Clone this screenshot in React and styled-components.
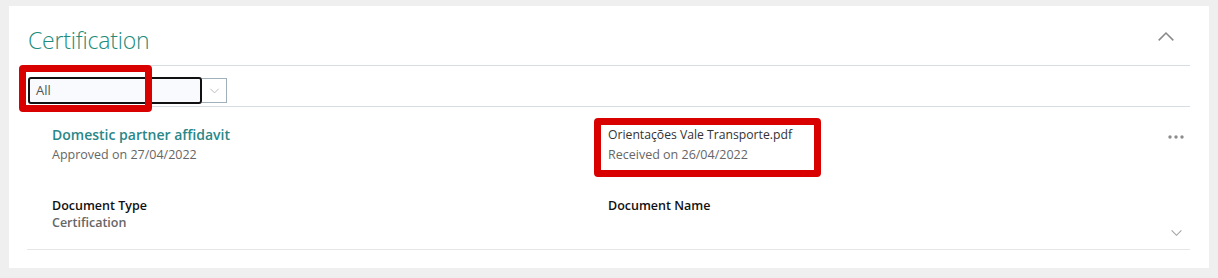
import React from "react";
import styled, { createGlobalStyle } from "styled-components";

const Global = createGlobalStyle`
  html, body { margin: 0; padding: 0; background: #efefef; }
  body { font-family: "Open Sans", "Noto Sans", sans-serif; }
  * { box-sizing: border-box; }
`;

const Page = styled.div`
  padding: 6px 9px 11px 9px;
`;

const Panel = styled.section`
  background: #fff;
  padding: 0 19px 18px 18px;
  position: relative;
`;

const Header = styled.div`
  display: flex;
  align-items: center;
  justify-content: space-between;
  height: 60px;
  border-bottom: 1px solid #d6dde3;
  padding: 9px 0 0 1px;
`;

const Title = styled.h2`
  margin: 0;
  font-weight: 300;
  font-size: 23px;
  color: #1c8c7c;
  letter-spacing: -0.2px;
`;

const IconButton = styled.button`
  border: 0;
  background: none;
  padding: 0;
  margin-right: ${(p) => p.$mr || 0}px;
  margin-top: ${(p) => p.$mt || 0}px;
  display: flex;
  align-items: center;
  justify-content: center;
  color: #8a8a8a;
  cursor: pointer;
`;

const FilterRow = styled.div`
  display: flex;
  align-items: center;
  height: 41px;
  padding: 8px 0 0 1px;
  border-bottom: 1px solid #d6dde3;
`;

const Select = styled.div`
  display: flex;
  align-items: stretch;
  height: 27px;
`;

const SelectBox = styled.div`
  width: 174px;
  border: 2px solid #111;
  border-radius: 3px;
  background: #f8fafd;
  font-size: 13px;
  color: #555;
  display: flex;
  align-items: center;
  padding-left: 6px;
`;

const SelectButton = styled.div`
  width: 25px;
  margin: 1px 0;
  border: 1px solid #9fb0bb;
  border-left: 0;
  display: flex;
  align-items: center;
  justify-content: center;
  color: #b0b0b0;
`;

const Item = styled.div`
  display: flex;
  border-bottom: 1px solid #e6e6e6;
  padding: 18px 0 0 25px;
  height: 143px;
  position: relative;
`;

const Grid = styled.div`
  flex: 1;
  display: grid;
  grid-template-columns: 556px 1fr;
  grid-template-rows: 72px auto;
`;

const Cell = styled.div`
  display: flex;
  flex-direction: column;
`;

const ItemTitle = styled.a`
  font-size: 14px;
  font-weight: 600;
  color: #2a8788;
  line-height: 20px;
  text-decoration: none;
`;

const FileName = styled.div`
  font-size: 12.2px;
  color: #333;
  line-height: 20px;
`;

const Sub = styled.div`
  font-size: 12.5px;
  color: #666;
  line-height: 19px;
`;

const Label = styled.div`
  font-size: 12.5px;
  font-weight: 600;
  color: #111;
  line-height: 17px;
`;

const Value = styled.div`
  font-size: 12.5px;
  font-weight: 600;
  color: #666;
  line-height: 17px;
`;

const Side = styled.div`
  width: 28px;
  display: flex;
  flex-direction: column;
  align-items: flex-end;
  justify-content: space-between;
  padding: 10px 6px 10px 0;
`;

const Highlight = styled.div`
  position: absolute;
  left: ${(p) => p.$x}px;
  top: ${(p) => p.$y}px;
  width: ${(p) => p.$w}px;
  height: ${(p) => p.$h}px;
  border: 7px solid #d90000;
  border-radius: 4px;
  pointer-events: none;
`;

const Chevron = ({ up, size = 16, color = "#8a8a8a", w = 1.3 }) => (
  <svg width={size} height={size} viewBox="0 0 16 16" fill="none" stroke={color} strokeWidth={w}>
    {up ? <path d="M1.5 11 L8 4.5 L14.5 11" /> : <path d="M2 5.5 L8 11.5 L14 5.5" />}
  </svg>
);

const Dots = () => (
  <svg width="16" height="4" viewBox="0 0 16 4" fill="#8c8c8c">
    <circle cx="2" cy="2" r="1.7" />
    <circle cx="8" cy="2" r="1.7" />
    <circle cx="14" cy="2" r="1.7" />
  </svg>
);

export default function App() {
  return (
    <>
      <Global />
      <Page>
        <Panel>
          <Header>
            <Title>Certification</Title>
            <IconButton $mr={15} $mt={-6} aria-label="Collapse">
              <Chevron up size={18} w={1.4} />
            </IconButton>
          </Header>
          <FilterRow>
            <Select>
              <SelectBox>All</SelectBox>
              <SelectButton>
                <Chevron size={11} color="#b5b5b5" w={1.3} />
              </SelectButton>
            </Select>
          </FilterRow>
          <Item>
            <Grid>
              <Cell>
                <ItemTitle href="#">Domestic partner affidavit</ItemTitle>
                <Sub>Approved on 27/04/2022</Sub>
              </Cell>
              <Cell>
                <FileName>Orientações Vale Transporte.pdf</FileName>
                <Sub>Received on 26/04/2022</Sub>
              </Cell>
              <Cell>
                <Label>Document Type</Label>
                <Value>Certification</Value>
              </Cell>
              <Cell>
                <Label>Document Name</Label>
              </Cell>
            </Grid>
            <Side>
              <IconButton aria-label="More">
                <Dots />
              </IconButton>
              <IconButton $mr={1} aria-label="Expand">
                <Chevron size={13} color="#a0a0a0" w={1.3} />
              </IconButton>
            </Side>
          </Item>
          <Highlight $x={10} $y={59} $w={133} $h={47} />
          <Highlight $x={585} $y={112} $w={227} $h={59} />
        </Panel>
      </Page>
    </>
  );
}
